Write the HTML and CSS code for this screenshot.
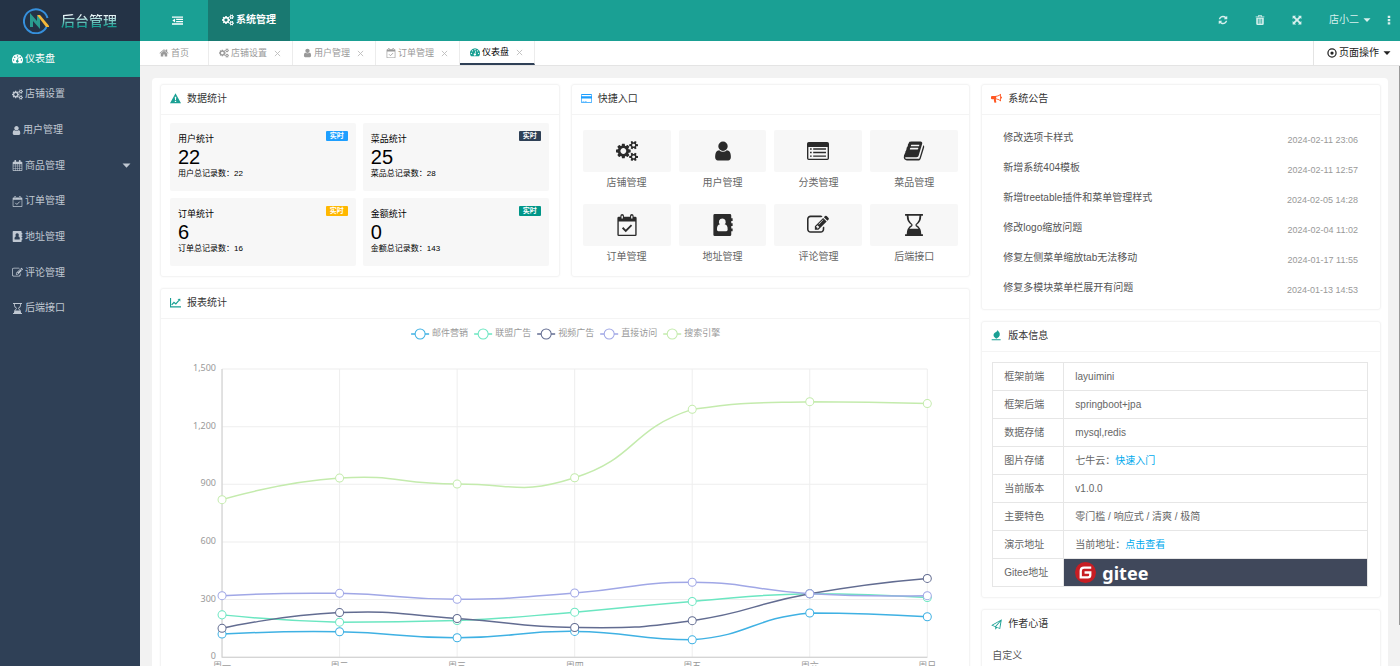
FILE: index.html
```html
<!DOCTYPE html>
<html lang="zh-CN">
<head>
    <meta charset="UTF-8">
    <meta name="viewport" content="width=device-width, initial-scale=1.0">
    <title>后台管理</title>
    <link rel="stylesheet" href="styles.css">
</head>
<body>

    <!-- icon sprite -->
    <svg class="sprite" aria-hidden="true">
        <symbol id="i-cogs" viewBox="0 0 1920 1792"><path d="M896 896q0-106-75-181t-181-75-181 75-75 181 75 181 181 75 181-75 75-181zm768 512q0-52-38-90t-90-38-90 38-38 90q0 53 37.500 90.500t90.500 37.500 90.500-37.500 37.500-90.500zm0-1024q0-52-38-90t-90-38-90 38-38 90q0 53 37.500 90.500t90.500 37.500 90.500-37.500 37.500-90.500zm-384 421v185q0 10-7 19.500t-16 10.500l-155 24q-11 35-32 76 34 48 90 115 7 11 7 20 0 12-7 19-23 30-82.500 89.500t-78.500 59.500q-11 0-21-7l-115-90q-37 19-77 31-11 108-23 155-7 24-30 24h-186q-11 0-20-7.500t-10-17.500l-23-153q-34-10-75-31l-118 89q-7 7-20 7-11 0-21-8-144-133-144-160 0-9 7-19 10-14 41-53t47-61q-23-44-35-82l-152-24q-10-1-17-9.500t-7-19.500v-185q0-10 7-19.500t16-10.500l155-24q11-35 32-76-34-48-90-115-7-11-7-20 0-12 7-20 22-30 82-89t79-59q11 0 21 7l115 90q34-18 77-32 11-108 23-154 7-24 30-24h186q11 0 20 7.500t10 17.500l23 153q34 10 75 31l118-89q8-7 20-7 11 0 21 8 144 133 144 160 0 8-7 19-12 16-42 54t-45 60q23 48 34 82l152 23q10 2 17 10.500t7 19.500zm640 533v140q0 16-149 31-12 27-30 52 51 113 51 138 0 4-4 7-122 71-124 71-8 0-46-47t-52-68q-20 2-30 2t-30-2q-14 21-52 68t-46 47q-2 0-124-71-4-3-4-7 0-25 51-138-18-25-30-52-149-15-149-31v-140q0-16 149-31 13-29 30-52-51-113-51-138 0-4 4-7 4-2 35-20t59-34 30-16q8 0 46 46.500t52 67.500q20-2 30-2t30 2q51-71 92-112l6-2q4 0 124 70 4 3 4 7 0 25-51 138 17 23 30 52 149 15 149 31zm0-1024v140q0 16-149 31-12 27-30 52 51 113 51 138 0 4-4 7-122 71-124 71-8 0-46-47t-52-68q-20 2-30 2t-30-2q-14 21-52 68t-46 47q-2 0-124-71-4-3-4-7 0-25 51-138-18-25-30-52-149-15-149-31v-140q0-16 149-31 13-29 30-52-51-113-51-138 0-4 4-7 4-2 35-20t59-34 30-16q8 0 46 46.500t52 67.500q20-2 30-2t30 2q51-71 92-112l6-2q4 0 124 70 4 3 4 7 0 25-51 138 17 23 30 52 149 15 149 31z"/></symbol>
        <symbol id="i-user" viewBox="128 0 1536 1792"><path d="M1536 1399q0 109-62.500 187t-150.500 78h-854q-88 0-150.500-78t-62.500-187q0-85 8.500-160.500t31.500-152 58.500-131 94-89 134.500-34.500q131 128 313 128t313-128q76 0 134.500 34.500t94 89 58.500 131 31.500 152 8.500 160.500zm-256-887q0 159-112.500 271.500t-271.500 112.500-271.500-112.500-112.500-271.500 112.500-271.500 271.500-112.500 271.500 112.500 112.500 271.500z"/></symbol>
        <symbol id="i-home" viewBox="0 0 1792 1792"><path d="M1472 992v480q0 26-19 45t-45 19h-384v-384h-256v384h-384q-26 0-45-19t-19-45v-480q0-1 .5-3t.5-3l575-474 575 474q1 2 1 6zm223-69l-62 74q-8 9-21 11h-3q-13 0-21-7l-692-577-692 577q-12 8-24 7-13-2-21-11l-62-74q-8-10-7-23.500t11-21.500l719-599q32-26 76-26t76 26l244 204v-195q0-14 9-23t23-9h192q14 0 23 9t9 23v408l219 182q10 8 11 21.500t-7 23.500z"/></symbol>
        <symbol id="i-refresh" viewBox="0 0 1792 1792"><path d="M1639 1056q0 5-1 7-64 268-268 434.500t-478 166.500q-146 0-282.500-55t-243.500-157l-129 129q-19 19-45 19t-45-19-19-45v-448q0-26 19-45t45-19h448q26 0 45 19t19 45-19 45l-137 137q71 66 161 102t187 36q134 0 250-65t186-179q11-17 53-117 8-23 30-23h192q13 0 22.500 9.500t9.500 22.500zm25-800v448q0 26-19 45t-45 19h-448q-26 0-45-19t-19-45 19-45l138-138q-148-137-349-137-134 0-250 65t-186 179q-11 17-53 117-8 23-30 23h-199q-13 0-22.500-9.500t-9.500-22.500v-7q65-268 270-434.500t480-166.500q146 0 284 55.500t245 156.500l130-129q19-19 45-19t45 19 19 45z"/></symbol>
        <symbol id="i-edit" viewBox="0 0 1792 1792"><path d="M888 1184l116-116-152-152-116 116v56h96v96h56zm440-720q-16-16-33 1l-350 350q-17 17-1 33t33-1l350-350q17-17 1-33zm80 594v190q0 119-84.500 203.500t-203.500 84.500h-832q-119 0-203.500-84.500t-84.500-203.500v-832q0-119 84.500-203.500t203.500-84.500h832q63 0 117 25 15 7 18 23 3 17-9 29l-49 49q-14 14-32 8-23-6-45-6h-832q-66 0-113 47t-47 113v832q0 66 47 113t113 47h832q66 0 113-47t47-113v-126q0-13 9-22l64-64q15-15 35-7t20 29zm-96-738l288 288-672 672h-288v-288zm444 132l-92 92-288-288 92-92q28-28 68-28t68 28l152 152q28 28 28 68t-28 68z"/></symbol>
        <symbol id="i-book" viewBox="0 0 1792 1792"><path d="M1703 478q40 57 18 129l-275 906q-19 64-76.500 107.500t-122.500 43.500h-923q-77 0-148.500-53.500t-99.500-131.500q-24-67-2-127 0-4 3-27t4-37q1-8-3-21.500t-3-19.500q2-11 8-21t16.500-23.500 16.500-23.500q23-38 45-91.500t30-91.500q3-10 .5-30t-.5-28q3-11 17-28t17-23q21-36 42-92t25-90q1-9-2.500-32t.5-28q4-13 22-30.500t22-22.500q19-26 42.500-84.500t27.500-96.500q1-8-3-25.500t-2-26.500q2-8 9-18t18-23 17-21q8-12 16.500-30.500t15-35 16-36 19.500-32 26.500-23.500 36-11.500 47.500 5.500l-1 3q38-9 51-9h761q74 0 114 56t18 130l-274 906q-36 119-71.500 153.500t-128.500 34.500h-869q-27 0-38 15-11 16-1 43 24 70 144 70h923q29 0 56-15.500t35-41.500l300-987q7-22 5-57 38 15 59 43zm-1064 2q-4 13 2 22.500t20 9.500h608q13 0 25.500-9.500t16.500-22.500l21-64q4-13-2-22.500t-20-9.500h-608q-13 0-25.500 9.500t-16.500 22.500zm-83 256q-4 13 2 22.500t20 9.500h608q13 0 25.500-9.500t16.500-22.500l21-64q4-13-2-22.500t-20-9.500h-608q-13 0-25.500 9.500t-16.500 22.500z"/></symbol>
        <symbol id="i-dash" viewBox="0 0 16 16"><path fill-rule="evenodd" d="M8 2a8 8 0 0 0-6.700 12.400q.3.400.8.400h11.800q.5 0 .8-.4A8 8 0 0 0 8 2zM2.300 9a1.100 1.100 0 1 0 0 2.200 1.100 1.100 0 0 0 0-2.200zM4 5a1.100 1.100 0 1 0 0 2.200A1.100 1.100 0 0 0 4 5zM8 3.300a1.100 1.100 0 1 0 0 2.200 1.100 1.100 0 0 0 0-2.200zM12 5a1.100 1.100 0 1 0 0 2.200A1.100 1.100 0 0 0 12 5zM13.700 9a1.100 1.100 0 1 0 0 2.200 1.100 1.100 0 0 0 0-2.200zM9.600 6.700l-1 3.700a1.800 1.800 0 1 1-1.100-.2l1-3.800z"/></symbol>
        <symbol id="i-calendar" viewBox="0 0 16 16"><path fill-rule="evenodd" d="M2 2.500h1.500V1q0-1 1-1h.5q1 0 1 1v1.500h4V1q0-1 1-1h.5q1 0 1 1v1.500H14q1 0 1 1V15q0 1-1 1H2q-1 0-1-1V3.500q0-1 1-1zM2 6v2.400h2.500V6zM5.200 6v2.400h2.400V6zM8.300 6v2.400h2.400V6zM11.500 6v2.400H14V6zM2 9.200v2.400h2.500V9.200zM5.200 9.200v2.400h2.400V9.200zM8.300 9.200v2.400h2.400V9.200zM11.500 9.200v2.400H14V9.200zM2 12.400v2.400h2.500v-2.400zM5.200 12.400v2.400h2.400v-2.400zM8.300 12.400v2.400h2.400v-2.400zM11.500 12.400v2.400H14v-2.400z"/></symbol>
        <symbol id="i-check" viewBox="0 0 16 16"><path fill-rule="evenodd" d="M2 2h1.200V1.300a1.300 1.300 0 0 1 2.600 0V2h4.400v-.7a1.300 1.300 0 0 1 2.600 0V2H14q1 0 1 1v12q0 1-1 1H2q-1 0-1-1V3q0-1 1-1zM2 5.500V15h12V5.500zM4 1.200v2h1v-2zM11 1.200v2h1v-2z"/><path d="M4.800 10l2.300 2.300 4.200-4.200" fill="none" stroke="currentColor" stroke-width="1.300"/></symbol>
        <symbol id="i-address" viewBox="0 0 16 16"><path fill-rule="evenodd" d="M2 0h11q1 0 1 1v2h1v2h-1v1.800h1v2h-1v1.800h1v2h-1V15q0 1-1 1H2q-1 0-1-1V1q0-1 1-1zM7.500 3.200a2.500 2.500 0 0 0-1.700 4.300q-2.200.3-2.200 3.700 0 1.300 1 1.300h5.800q1 0 1-1.300 0-3.400-2.200-3.700a2.500 2.500 0 0 0-1.700-4.300z"/></symbol>
        <symbol id="i-hourglass" viewBox="0 0 16 16"><path fill-rule="evenodd" d="M1.500 0h13v1.300h-1.200Q13.300 6 9.800 8q3.500 2 3.500 6.700h1.200V16h-13v-1.300h1.200Q2.700 10 6.200 8q-3.500-2-3.500-6.700H1.500zM4 1.300q0 3.300 1.700 5Q7 7.200 7 8t-1.300 1.700q-.7.500-1 1.100h6.600q-.3-.6-1-1.100Q9 8.800 9 8t1.300-1.700q1.700-1.700 1.700-5z"/></symbol>
        <symbol id="i-list" viewBox="0 0 16 16"><path fill-rule="evenodd" d="M1.300 1.500h13.400q1.300 0 1.300 1.300v10.400q0 1.300-1.300 1.300H1.300Q0 14.500 0 13.200V2.800q0-1.300 1.300-1.300zM1 5v8.200q0 .4.400.4h13.200q.4 0 .4-.4V5zM2.200 6h1.200v1H2.200zM4.500 6h9.300v1H4.500zM2.200 8.600h1.200v1H2.200zM4.500 8.600h9.300v1H4.500zM2.200 11.200h1.200v1H2.200zM4.500 11.200h9.300v1H4.500z"/></symbol>
        <symbol id="i-outdent" viewBox="0 0 16 16"><path d="M0 2h16v2H0zM6 5.400h10v2H6zM6 8.700h10v2H6zM0 12h16v2H0zM4.500 5v6L.5 8z"/></symbol>
        <symbol id="i-trash" viewBox="0 0 16 16"><path fill-rule="evenodd" d="M5.500 0h5l1 2.200H15v1.500H1V2.200h3.500zM6.200 1.200l-.5 1h4.600l-.5-1zM2 4.500h12V14q0 2-2 2H4q-2 0-2-2zM4.600 6v8h1.200V6zM7.400 6v8h1.200V6zM10.200 6v8h1.200V6z"/></symbol>
        <symbol id="i-expand" viewBox="0 0 16 16"><path d="M1 1h5.500L4.800 2.700 8 5.900l3.200-3.200L9.500 1H15v5.500l-1.700-1.700L10.100 8l3.200 3.200L15 9.500V15H9.500l1.700-1.700L8 10.100l-3.200 3.200L6.500 15H1V9.500l1.700 1.700L5.900 8 2.700 4.800 1 6.500z"/></symbol>
        <symbol id="i-dots" viewBox="0 0 16 16"><path d="M6 1h4v3.600H6zM6 6.200h4v3.600H6zM6 11.400h4V15H6z"/></symbol>
        <symbol id="i-caret" viewBox="0 0 16 16"><path d="M1 4.500h14L8 12z"/></symbol>
        <symbol id="i-close" viewBox="0 0 16 16"><path d="M2 2l12 12M14 2L2 14" fill="none" stroke="currentColor" stroke-width="2"/></symbol>
        <symbol id="i-dot" viewBox="0 0 16 16"><circle cx="8" cy="8" r="6.500" fill="none" stroke="currentColor" stroke-width="2"/><circle cx="8" cy="8" r="2.600"/></symbol>
        <symbol id="i-warning" viewBox="0 0 16 16"><path fill-rule="evenodd" d="M8 .5l8 14.500H0zM6.900 5.500l.4 4.500h1.400l.4-4.500zM7 11.200v2h2v-2z"/></symbol>
        <symbol id="i-card" viewBox="0 0 16 16"><path fill-rule="evenodd" d="M1.300 1.500h13.400Q16 1.500 16 2.800v10.400q0 1.300-1.300 1.300H1.300Q0 14.500 0 13.200V2.800q0-1.300 1.300-1.300zM1 3v1.800h14V3zM1 8v5.500h14V8zM2.200 11.500h2v1h-2zM5.200 11.500h3v1h-3z"/></symbol>
        <symbol id="i-horn" viewBox="0 0 16 16"><path fill-rule="evenodd" d="M14.500 1v4.200a1.500 1.500 0 0 1 0 3V12.500q-3.500-3-7-3.300-1 .7-.2 1.800-.5 1 .8 2.200-.8 1.400-3 .9-1.300-2.800-.8-5H1.500Q0 9 0 7.700v-2Q0 4.400 1.500 4.400H6Q10 4.400 14.500 1zM13.300 3.400Q10.500 5.300 7.500 5.600v2.300q3 .3 5.800 2.200z"/></symbol>
        <symbol id="i-chart" viewBox="0 0 16 16"><path d="M.7 1.500v12.800H16M2.500 11.500l3.300-3.700 2.700 2.200 4.500-5" fill="none" stroke="currentColor" stroke-width="1.800"/><path d="M15 2.500v4.200L10.900 3z"/></symbol>
        <symbol id="i-leaf" viewBox="0 0 16 16"><path d="M9.500 0q4 4 3.200 7.700-1 3.600-5 5Q2.500 9.500 4 5.800q.8-1.800 2.700-2.500Q9.500 2 9.500 0zM1 13.500h13V15H1z"/></symbol>
        <symbol id="i-plane" viewBox="0 0 16 16"><path fill-rule="evenodd" d="M15.800.3l-2.500 14.200-4.500-1.800-2.500 3-.2-4.200-5.800-2.400zM12.600 3.300L2.800 9l3.400 1.400zM13.800 3.500l-6.500 7.600 5 2z"/></symbol>
    </svg>

    <div class="app">
        <aside class="sidebar">
            <a class="logo" href="#">
                <svg class="logo-mark" viewBox="0 0 26 26">
                    <path d="M23.500 19A12 12 0 1 1 24.500 10" fill="none" stroke="#3690dc" stroke-width="2"/>
                    <path d="M8.500 19V9l7 8V8" fill="none" stroke="#2a9c8f" stroke-width="3"/>
                    <path d="M14 7h3l10 12h-4z" fill="#f5b83a"/>
                </svg>
                <span>后台管理</span>
            </a>
            <nav class="menu">
                <a class="active" href="#"><svg><use href="#i-dash"/></svg>仪表盘</a>
                <a href="#"><svg><use href="#i-cogs"/></svg>店铺设置</a>
                <a href="#"><svg class="narrow"><use href="#i-user"/></svg>用户管理</a>
                <a href="#"><svg><use href="#i-calendar"/></svg>商品管理<svg class="more"><use href="#i-caret"/></svg></a>
                <a href="#"><svg><use href="#i-check"/></svg>订单管理</a>
                <a href="#"><svg><use href="#i-address"/></svg>地址管理</a>
                <a href="#"><svg><use href="#i-edit"/></svg>评论管理</a>
                <a href="#"><svg><use href="#i-hourglass"/></svg>后端接口</a>
            </nav>
        </aside>

        <div class="body">
            <header class="topbar">
                <button class="fold" aria-label="折叠"><svg><use href="#i-outdent"/></svg></button>
                <a class="module" href="#"><svg><use href="#i-cogs"/></svg>系统管理</a>
                <div class="tools">
                    <button aria-label="刷新"><svg><use href="#i-refresh"/></svg></button>
                    <button aria-label="清理"><svg><use href="#i-trash"/></svg></button>
                    <button aria-label="全屏"><svg><use href="#i-expand"/></svg></button>
                    <button class="account">店小二<svg><use href="#i-caret"/></svg></button>
                    <button class="dots" aria-label="更多"><svg><use href="#i-dots"/></svg></button>
                </div>
            </header>

            <div class="tabs">
                <a class="tab home" href="#"><svg><use href="#i-home"/></svg>首页</a>
                <a class="tab" href="#"><svg><use href="#i-cogs"/></svg>店铺设置<svg class="close"><use href="#i-close"/></svg></a>
                <a class="tab" href="#"><svg class="narrow"><use href="#i-user"/></svg>用户管理<svg class="close"><use href="#i-close"/></svg></a>
                <a class="tab" href="#"><svg><use href="#i-check"/></svg>订单管理<svg class="close"><use href="#i-close"/></svg></a>
                <a class="tab current" href="#"><svg><use href="#i-dash"/></svg>仪表盘<svg class="close"><use href="#i-close"/></svg></a>
                <button class="page-menu"><svg><use href="#i-dot"/></svg>页面操作<svg class="arrow"><use href="#i-caret"/></svg></button>
            </div>

            <main class="page">
                <div class="board">
                    <section class="card">
                        <h2 class="teal"><svg><use href="#i-warning"/></svg>数据统计</h2>
                        <div class="stats">
                            <div class="stat"><div class="stat-head">用户统计<span class="badge blue">实时</span></div><strong>22</strong><small>用户总记录数：22</small></div>
                            <div class="stat"><div class="stat-head">菜品统计<span class="badge navy">实时</span></div><strong>25</strong><small>菜品总记录数：28</small></div>
                            <div class="stat"><div class="stat-head">订单统计<span class="badge amber">实时</span></div><strong>6</strong><small>订单总记录数：16</small></div>
                            <div class="stat"><div class="stat-head">金额统计<span class="badge green">实时</span></div><strong>0</strong><small>金额总记录数：143</small></div>
                        </div>
                    </section>

                    <section class="card">
                        <h2 class="sky"><svg><use href="#i-card"/></svg>快捷入口</h2>
                        <div class="shortcuts">
                            <a href="#"><span class="tile"><svg><use href="#i-cogs"/></svg></span>店铺管理</a>
                            <a href="#"><span class="tile"><svg><use href="#i-user"/></svg></span>用户管理</a>
                            <a href="#"><span class="tile"><svg><use href="#i-list"/></svg></span>分类管理</a>
                            <a href="#"><span class="tile"><svg><use href="#i-book"/></svg></span>菜品管理</a>
                            <a href="#"><span class="tile"><svg><use href="#i-check"/></svg></span>订单管理</a>
                            <a href="#"><span class="tile"><svg><use href="#i-address"/></svg></span>地址管理</a>
                            <a href="#"><span class="tile"><svg><use href="#i-edit"/></svg></span>评论管理</a>
                            <a href="#"><span class="tile"><svg><use href="#i-hourglass"/></svg></span>后端接口</a>
                        </div>
                    </section>

                    <div class="side">
                        <section class="card">
                            <h2 class="orange"><svg><use href="#i-horn"/></svg>系统公告</h2>
                            <ul class="notices">
                                <li>修改选项卡样式<time>2024-02-11 23:06</time></li>
                                <li>新增系统404模板<time>2024-02-11 12:57</time></li>
                                <li>新增treetable插件和菜单管理样式<time>2024-02-05 14:28</time></li>
                                <li>修改logo缩放问题<time>2024-02-04 11:02</time></li>
                                <li>修复左侧菜单缩放tab无法移动<time>2024-01-17 11:55</time></li>
                                <li>修复多模块菜单栏展开有问题<time>2024-01-13 14:53</time></li>
                            </ul>
                        </section>

                        <section class="card">
                            <h2 class="teal"><svg><use href="#i-leaf"/></svg>版本信息</h2>
                            <table class="version">
                                <tr><th>框架前端</th><td>layuimini</td></tr>
                                <tr><th>框架后端</th><td>springboot+jpa</td></tr>
                                <tr><th>数据存储</th><td>mysql,redis</td></tr>
                                <tr><th>图片存储</th><td>七牛云：<a href="#">快速入门</a></td></tr>
                                <tr><th>当前版本</th><td>v1.0.0</td></tr>
                                <tr><th>主要特色</th><td>零门槛 / 响应式 / 清爽 / 极简</td></tr>
                                <tr><th>演示地址</th><td>当前地址：<a href="#">点击查看</a></td></tr>
                                <tr><th>Gitee地址</th><td class="gitee"><a href="#"><svg viewBox="0 0 22 22"><circle cx="11" cy="11" r="11" fill="#c71d23"/><path d="M17 6H9.500Q6 6 6 9.500V16h7.500q2.500 0 2.500-2.500V11h-6" fill="none" stroke="#fff" stroke-width="2.400"/></svg>gitee</a></td></tr>
                            </table>
                        </section>

                        <section class="card author">
                            <h2 class="teal"><svg><use href="#i-plane"/></svg>作者心语</h2>
                            <p>自定义</p>
                        </section>
                    </div>

                    <section class="card report">
                        <h2 class="teal"><svg><use href="#i-chart"/></svg>报表统计</h2>
                        <svg class="chart" id="chart" viewBox="0 0 808 366"></svg>
                    </section>
                </div>
            </main>
            <span class="scroll-thumb"></span>
        </div>
    </div>

    <script>
        const days = ["周一", "周二", "周三", "周四", "周五", "周六", "周日"];
        const series = [
            { name: "邮件营销", color: "#3fb1e3", data: [120, 132, 101, 134, 90, 230, 210] },
            { name: "联盟广告", color: "#6be6c1", data: [220, 182, 191, 234, 290, 330, 310] },
            { name: "视频广告", color: "#626c91", data: [150, 232, 201, 154, 190, 330, 410] },
            { name: "直接访问", color: "#a0a7e6", data: [320, 332, 301, 334, 390, 330, 320] },
            { name: "搜索引擎", color: "#c4ebad", data: [820, 932, 901, 934, 1290, 1330, 1320] }
        ];

        const x0 = 61, x1 = 766, y0 = 50, y1 = 338;
        const step = (x1 - x0) / (days.length - 1);
        const px = i => x0 + i * step;
        const py = v => y1 - v / 1500 * (y1 - y0);

        // smooth curve, control points stay between the lowest and highest value
        function curve(pts) {
            const ys = pts.map(p => p[1]);
            const lo = Math.min(...ys), hi = Math.max(...ys);
            const keep = p => [p[0], Math.max(lo, Math.min(hi, p[1]))];
            let d = `M${pts[0]}`;
            let out = pts[0];
            for (let i = 1; i < pts.length; i++) {
                const prev = pts[i - 1], cur = pts[i], next = pts[i + 1];
                let into = cur, leave = cur;
                if (next) {
                    const lp = Math.hypot(cur[0] - prev[0], cur[1] - prev[1]);
                    const ln = Math.hypot(next[0] - cur[0], next[1] - cur[1]);
                    const k = ln / (lp + ln);
                    into = keep(cur.map((c, n) => c - (next[n] - prev[n]) * 0.5 * (1 - k)));
                    leave = keep(cur.map((c, n) => c + (next[n] - prev[n]) * 0.5 * k));
                }
                d += `C${out} ${into} ${cur}`;
                out = leave;
            }
            return d;
        }

        let html = "";
        for (let v = 0; v <= 1500; v += 300) {
            html += `<path class="grid" d="M${x0} ${py(v)}H${x1}"/>`;
            html += `<text x="${x0 - 6}" y="${py(v) + 2}" text-anchor="end">${v.toLocaleString("en-US")}</text>`;
        }
        days.forEach((day, i) => {
            html += `<path class="grid" d="M${px(i)} ${y0}V${y1}"/>`;
            html += `<text x="${px(i)}" y="${y1 + 12}" text-anchor="middle">${day}</text>`;
        });
        html += `<path class="axis" d="M${x0} ${y0}V${y1}H${x1}"/>`;

        series.forEach((s, i) => {
            const pts = s.data.map((v, n) => [px(n), py(v)]);
            html += `<g stroke="${s.color}"><path class="line" d="${curve(pts)}"/>`;
            pts.forEach(p => html += `<circle cx="${p[0]}" cy="${p[1]}" r="4"/>`);
            const x = 259 + i * 63;
            html += `<path class="line" d="M${x - 9} 15H${x + 9}"/><circle cx="${x}" cy="15" r="5"/></g>`;
            html += `<text x="${x + 12}" y="17">${s.name}</text>`;
        });
        document.getElementById("chart").innerHTML = html;
    </script>

</body>
</html>
```

FILE: styles.css
```css
* {
    box-sizing: border-box;
}

body {
    margin: 0;
    font-family: "Liberation Sans", "Noto Sans CJK SC", sans-serif;
    font-size: 10px;
    line-height: 16px;
    color: #333;
    background-color: #f2f2f2;
}

a {
    color: inherit;
    text-decoration: none;
}

button {
    padding: 0;
    border: none;
    background: none;
    font: inherit;
    color: inherit;
    cursor: pointer;
}

svg {
    flex: none;
    width: 11px;
    height: 11px;
    fill: currentColor;
}

.sprite {
    display: none;
}

.app {
    display: flex;
    height: 100vh;
}

/* sidebar */
.sidebar {
    flex: none;
    width: 140px;
    background-color: #2f4056;
}

.logo {
    display: flex;
    align-items: center;
    gap: 12px;
    height: 41px;
    padding-left: 23px;
    background-color: #243346;
}

.logo-mark {
    width: 26px;
    height: 26px;
}

.logo span {
    font-size: 14px;
    line-height: 20px;
    font-weight: 500;
    color: transparent;
    background: linear-gradient(#e8f4f6 25%, #1aa094 75%);
    -webkit-background-clip: text;
    background-clip: text;
}

.menu {
    display: grid;
    grid-auto-rows: 1fr;
    height: 285px;
}

.menu a {
    display: flex;
    align-items: center;
    gap: 2px;
    padding: 0 9px 0 12px;
    color: #c0c8d2;
}

.menu a.active {
    color: #fff;
    background-color: #1aa094;
}

.menu .narrow,
.tabs .narrow {
    width: 9px;
}

.menu .more {
    width: 9px;
    margin-left: auto;
}

/* top bar */
.body {
    position: relative;
    flex: 1;
    min-width: 0;
    display: flex;
    flex-direction: column;
}

.topbar {
    flex: none;
    display: flex;
    height: 41px;
    color: #fff;
    background-color: #1aa094;
}

.fold {
    width: 68px;
    padding-left: 6px;
}

.fold svg,
.tools svg {
    vertical-align: middle;
}

.module {
    display: flex;
    align-items: center;
    gap: 2px;
    padding: 0 14px 2px;
    font-weight: bold;
    background-color: #197971;
}

.module svg {
    width: 12px;
    height: 12px;
}

.tools {
    display: flex;
    margin-left: auto;
    padding-bottom: 2px;
    color: #d9f0ee;
}

.tools button {
    width: 37px;
}

.tools button svg {
    width: 10px;
    height: 10px;
}

.tools .account {
    display: flex;
    align-items: center;
    justify-content: flex-end;
    gap: 4px;
    width: 56px;
}

.tools .account svg {
    width: 8px;
}

.tools .dots {
    width: 29px;
    padding-left: 6px;
}

/* tabs */
.tabs {
    flex: none;
    display: flex;
    height: 25px;
    padding-left: 1px;
    font-size: 9px;
    color: #999;
    background-color: #fff;
    border-bottom: 1px solid #e4e4e4;
}

.tab {
    display: flex;
    align-items: center;
    gap: 2px;
    padding: 0 11px 0 10px;
    border-right: 1px solid #ececec;
}

.tab.home {
    padding: 0 19px 0 18px;
}

.tab svg {
    width: 10px;
    height: 10px;
}

.tab .close {
    width: 7px;
    height: 7px;
    margin-left: 5px;
    color: #bbb;
}

.tab.current {
    color: #000;
    border-bottom: 2px solid #2f4056;
}

.tab.current svg:first-child {
    color: #1aa094;
}

.page-menu {
    display: flex;
    align-items: center;
    gap: 2px;
    margin-left: auto;
    padding: 0 9px 0 13px;
    font-size: 10px;
    color: #222;
    border-left: 1px solid #e4e4e4;
}

.page-menu svg {
    width: 10px;
    height: 10px;
}

.page-menu .arrow {
    width: 8px;
    margin-left: 2px;
}

/* dashboard */
.page {
    flex: 1;
    min-height: 0;
    overflow-y: auto;
    padding: 12px;
    scrollbar-width: none;
}

.scroll-thumb {
    position: absolute;
    top: 66px;
    right: 0;
    width: 1px;
    height: 84%;
    background-color: #999;
}

.board {
    display: grid;
    grid-template-columns: repeat(3, 1fr);
    grid-template-rows: auto 1fr;
    gap: 11px;
    padding: 6px 7px 6px 8px;
    background-color: #fff;
    border-radius: 4px;
}

.card {
    min-width: 0;
    border: 1px solid #f4f4f4;
    border-radius: 3px;
    box-shadow: 0 0 2px #f4f4f4;
}

.card h2 {
    display: flex;
    align-items: center;
    gap: 6px;
    height: 30px;
    margin: 0;
    padding: 0 9px 2px;
    font-size: 10px;
    font-weight: normal;
    border-bottom: 1px solid #f4f4f4;
}

.teal svg {
    color: #1aa094;
}

.sky svg {
    color: #1e9fff;
}

.orange svg {
    color: #ff5722;
}

.stats {
    display: grid;
    grid-template-columns: 1fr 1fr;
    gap: 7px;
    padding: 8px 10px 10px 9px;
}

.stat {
    height: 68px;
    padding: 8px;
    color: #000;
    background-color: #f7f7f7;
    border-radius: 2px;
}

.stat-head {
    display: flex;
    justify-content: space-between;
    font-size: 9px;
}

.stat strong {
    display: block;
    font-size: 20px;
    line-height: 20px;
    font-weight: normal;
}

.stat small {
    display: block;
    font-size: 8px;
    line-height: 14px;
}

.badge {
    height: 10px;
    padding: 0 4px;
    font-size: 7px;
    line-height: 10px;
    font-weight: bold;
    color: #fff;
    border-radius: 1px;
}

.blue {
    background-color: #1e9fff;
}

.navy {
    background-color: #2f4056;
}

.amber {
    background-color: #ffb800;
}

.green {
    background-color: #009688;
}

.shortcuts {
    display: grid;
    grid-template-columns: repeat(4, 1fr);
    gap: 12px 8px;
    padding: 15px 11px 10px;
    color: #666;
    text-align: center;
}

.tile {
    display: flex;
    align-items: center;
    justify-content: center;
    height: 42px;
    margin-bottom: 3px;
    color: #2b2b2b;
    background-color: #f7f7f7;
    border-radius: 2px;
}

.shortcuts a {
    height: 62px;
}

.tile svg {
    width: 22px;
    height: 22px;
}

/* right column */
.side {
    grid-column: 3;
    grid-row: 1 / 3;
    display: flex;
    flex-direction: column;
    gap: 11px;
}

.notices {
    margin: 0;
    padding: 8px 22px 6px 21px;
    list-style: none;
    color: #555;
}

.notices li {
    display: flex;
    justify-content: space-between;
    height: 30px;
    line-height: 30px;
}

.notices time {
    padding-top: 2px;
    font-size: 9px;
    color: #999;
}

.version {
    width: calc(100% - 22px);
    margin: 10px 11px 10px 10px;
    border-collapse: collapse;
    color: #666;
}

.version th,
.version td {
    height: 28px;
    padding: 0 11px;
    font-weight: normal;
    text-align: left;
    border: 1px solid #e6e6e6;
}

.version th {
    width: 71px;
    white-space: nowrap;
}

.version td a {
    color: #01aaed;
}

.version .gitee {
    background-color: #40485b;
}

.gitee a {
    display: flex;
    align-items: center;
    gap: 6px;
    font-family: "Noto Sans", sans-serif;
    font-size: 18px;
    line-height: 22px;
    font-weight: bold;
}

.version .gitee a {
    color: #fff;
}

.gitee svg {
    width: 21px;
    height: 21px;
}

.author h2 {
    border-bottom: none;
}

.author p {
    margin: 0;
    padding: 8px 10px 18px;
    color: #555;
}

/* report chart */
.report {
    grid-column: 1 / 3;
}

.chart {
    display: block;
    width: 100%;
    height: auto;
}

.chart text {
    font-family: "Noto Sans", "Noto Sans CJK SC", sans-serif;
    font-size: 9px;
    fill: #999;
}

.chart .grid {
    stroke: #eee;
}

.chart .axis {
    fill: none;
    stroke: #ccc;
}

.chart .line {
    fill: none;
    stroke-width: 1.5;
}

.chart circle {
    fill: #fff;
}
```
